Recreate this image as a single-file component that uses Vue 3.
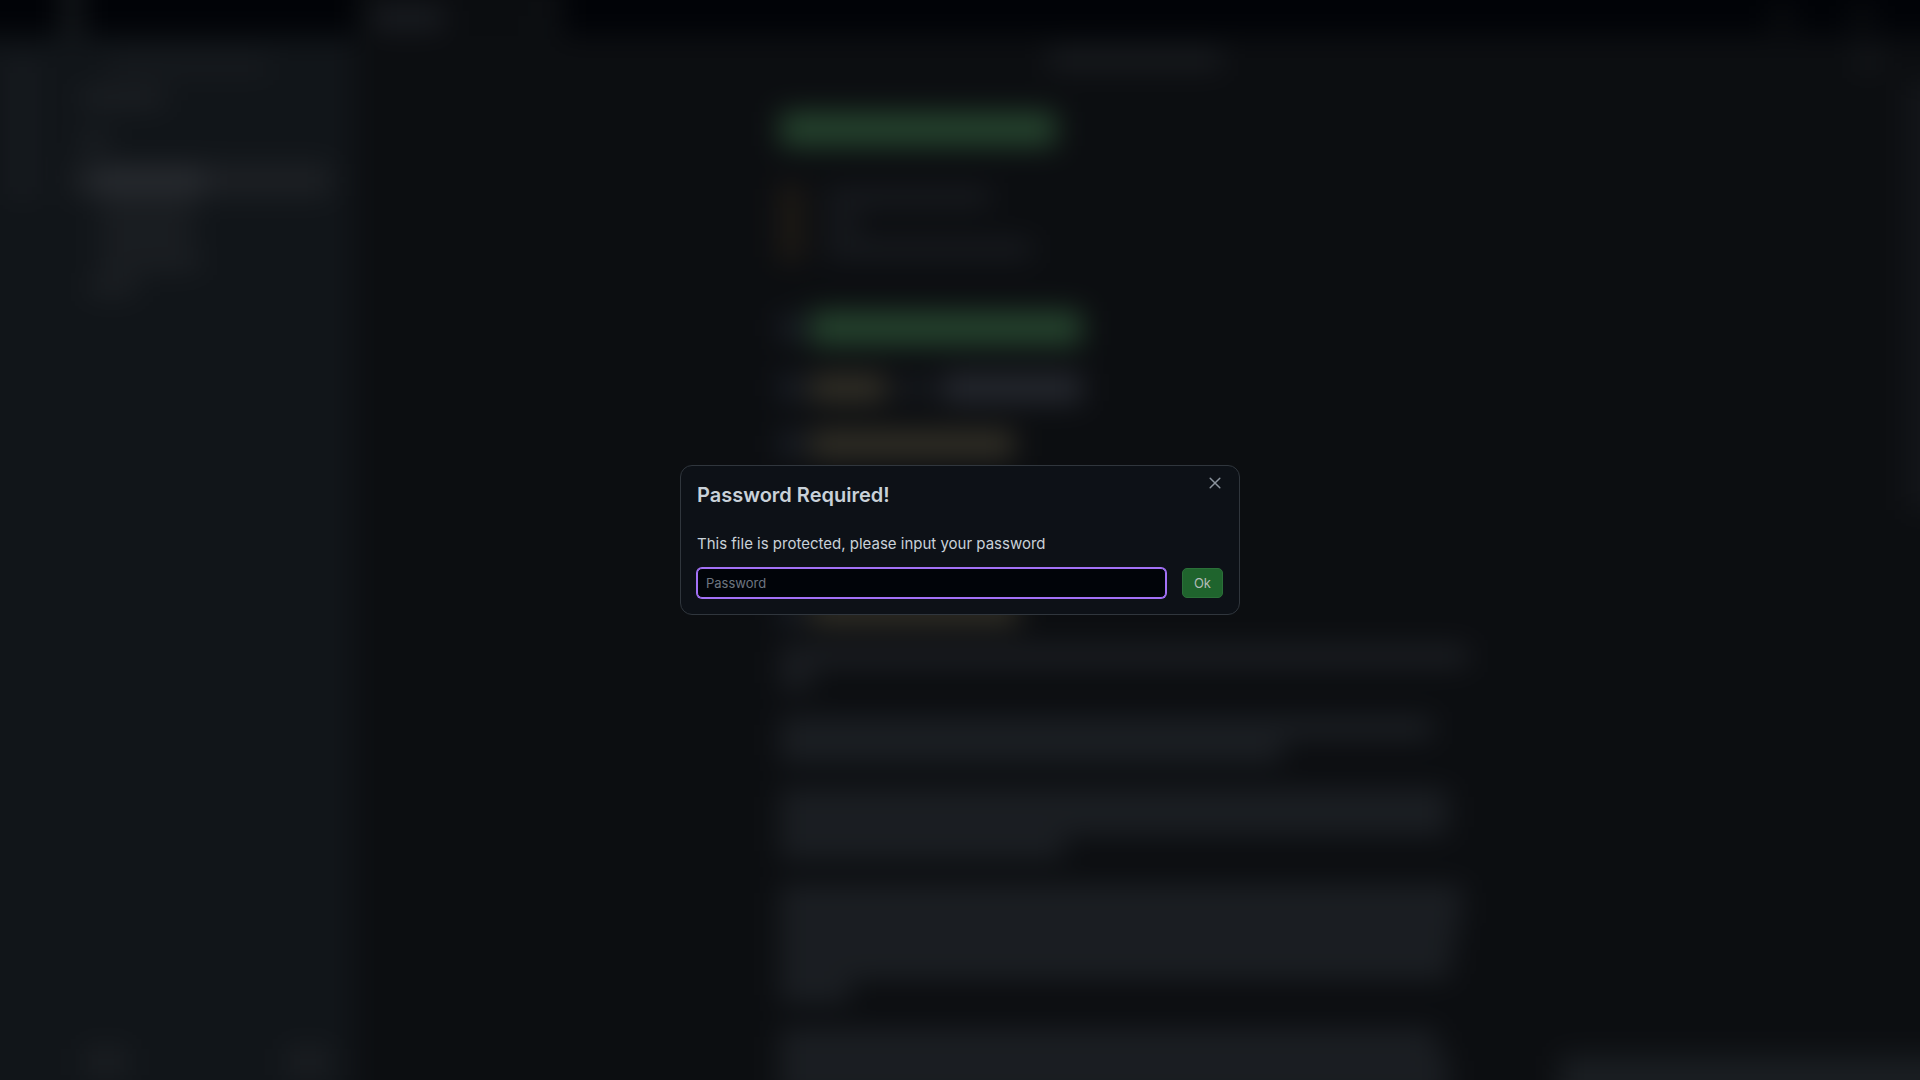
<script setup>
import { ref } from 'vue'

const password = ref('')
const open = ref(true)

const ribbon = [1, 2, 3, 4]
const tree = [
  { kind: 'tools', width: 160 },
  { kind: 'name', width: 84 },
  { kind: 'short', width: 28 },
  { kind: 'active', width: 112 },
  { kind: 'child', width: 96 },
  { kind: 'child', width: 92 },
  { kind: 'child', width: 100 },
  { kind: 'last', width: 48 },
]
const properties = [164, 32, 206]
const headings = [
  { kind: 'second', parts: [{ tone: 'green', width: 272 }] },
  { kind: 'mixed', parts: [{ tone: 'olive', width: 76 }, { tone: 'plain', width: 40 }, { tone: 'grey', width: 140 }] },
  { kind: 'third', parts: [{ tone: 'olive', width: 204 }] },
  { kind: 'fourth', parts: [{ tone: 'olive', width: 208 }] },
]
const paragraphs = [
  { soft: true, lines: [688, 32] },
  { soft: false, lines: [652, 502] },
  { soft: false, lines: [668, 668, 284] },
  { soft: false, lines: [682, 680, 674, 670, 70] },
  { soft: false, lines: [656, 668, 668] },
]
</script>

<template>
  <div class="app">
    <div class="workspace" aria-hidden="true">
      <div class="titlebar">
        <span class="toggle"></span>
        <div class="tab"><span class="tab-name"></span><span class="tab-close"></span></div>
        <div class="window-tools"><span></span><span></span></div>
      </div>
      <div class="panes">
        <div class="ribbon"><span v-for="n in ribbon" :key="n"></span></div>
        <div class="sidebar">
          <div v-for="(row, i) in tree" :key="i" class="row" :class="row.kind">
            <span :style="{ width: row.width + 'px' }"></span>
          </div>
          <div class="vault"><span></span><span></span></div>
        </div>
        <div class="note">
          <div class="crumbs"><span></span><i></i></div>
          <div class="scroller">
            <div class="article">
              <div class="title"></div>
              <div class="properties">
                <div v-for="(w, i) in properties" :key="i" class="property">
                  <i></i><span :style="{ width: w + 'px' }"></span>
                </div>
              </div>
              <div v-for="h in headings" :key="h.kind" class="heading" :class="h.kind">
                <i></i>
                <span v-for="(p, i) in h.parts" :key="i" :class="p.tone" :style="{ width: p.width + 'px' }"></span>
              </div>
              <div v-for="(p, i) in paragraphs" :key="i" class="paragraph" :class="{ soft: p.soft }">
                <span v-for="(w, j) in p.lines" :key="j" :style="{ width: w + 'px' }"></span>
              </div>
            </div>
            <div class="scrollbar"></div>
          </div>
        </div>
      </div>
      <div class="status"></div>
    </div>

    <div v-if="open" class="overlay">
      <form class="modal" role="dialog" aria-modal="true" aria-labelledby="modal-title" @submit.prevent="open = false">
        <button class="close" type="button" aria-label="Close" @click="open = false">
          <svg viewBox="0 0 18 18" width="18" height="18" fill="none" stroke="currentColor" stroke-width="1.5" stroke-linecap="round">
            <path d="M4.2 4.2 13.8 13.8M13.8 4.2 4.2 13.8" />
          </svg>
        </button>
        <h2 id="modal-title">Password Required!</h2>
        <label for="password">This file is protected, please input your password</label>
        <div class="fields">
          <input id="password" v-model="password" type="password" placeholder="Password" />
          <button class="ok" type="submit">Ok</button>
        </div>
      </form>
    </div>
  </div>
</template>

<style>
body {
  margin: 0;
  background: #0c0e11;
}
</style>

<style scoped>
* {
  box-sizing: border-box;
}

.app {
  position: relative;
  height: 100vh;
  overflow: hidden;
  font-family: Inter, "Liberation Sans", sans-serif;
  color: #c9d1d9;
}

/* Bleeds 40px past every edge so the blur never fades at the window's border. */
.workspace {
  position: relative;
  display: flex;
  flex-direction: column;
  height: calc(100% + 80px);
  margin: -40px;
  background: #0c0e11;
  filter: blur(14px);
}

.titlebar {
  display: flex;
  flex: none;
  height: 76px;
  background: #010307;
}

.toggle {
  width: 20px;
  margin-left: 102px;
  background: #16191c;
}

.tab {
  display: flex;
  align-items: center;
  justify-content: space-between;
  width: 208px;
  margin-left: 274px;
  padding: 40px 12px 0 16px;
  background: #0b0d10;
}

.tab-name {
  width: 72px;
  height: 20px;
  background: #1c1f24;
}

.tab-close {
  width: 16px;
  height: 16px;
  background: #101316;
}

.window-tools {
  display: flex;
  gap: 60px;
  margin-left: auto;
  padding: 48px 88px 0 0;
}

.window-tools span {
  width: 20px;
  height: 20px;
  background: #0e1013;
}

.panes {
  display: flex;
  flex: 1;
  min-height: 0;
}

.ribbon {
  display: flex;
  flex: none;
  flex-direction: column;
  align-items: center;
  gap: 12px;
  width: 84px;
  padding: 28px 0 0 40px;
  border-right: 1px solid #1b1e22;
  background: #111519;
}

.ribbon span {
  width: 22px;
  height: 24px;
  background: #1a1d22;
}

.sidebar {
  display: flex;
  flex: none;
  flex-direction: column;
  width: 310px;
  padding: 16px 24px 0 28px;
  background: #111519;
}

.row {
  display: flex;
  align-items: center;
  height: 26px;
  padding-left: 28px;
}

.row span {
  height: 14px;
  background: #202327;
}

.row.tools {
  height: 28px;
  padding-left: 36px;
}

.row.tools span {
  background: #191c20;
}

.row.name {
  height: 36px;
  padding-left: 8px;
}

.row.short {
  height: 48px;
  padding-left: 8px;
}

.row.active {
  height: 32px;
  padding-left: 20px;
  background: #1d2024;
}

.row.active span {
  height: 22px;
  background: #2a2d32;
}

.row.last {
  padding-left: 16px;
}

.vault {
  display: flex;
  justify-content: space-between;
  margin-top: auto;
  padding: 0 0 44px 12px;
}

.vault span {
  width: 44px;
  height: 28px;
  background: #1b1e22;
}

.note {
  display: flex;
  flex: 1;
  flex-direction: column;
  min-width: 0;
}

.crumbs {
  display: flex;
  flex: none;
  align-items: center;
  justify-content: flex-end;
  height: 46px;
}

.crumbs span {
  width: 172px;
  height: 18px;
  background: #1a1d21;
}

.crumbs i {
  width: 24px;
  height: 20px;
  margin-right: 80px;
  margin-left: calc(50% - 168px);
  background: #15181b;
}

.scroller {
  display: flex;
  flex: 1;
  min-height: 0;
  overflow: hidden;
}

.article {
  width: 700px;
  margin: 30px auto 0;
}

.title {
  width: 276px;
  height: 34px;
  background: #25442e;
}

.properties {
  margin: 38px 0 36px;
}

.property {
  display: flex;
  align-items: center;
  gap: 24px;
  height: 26px;
}

.property i {
  width: 22px;
  height: 20px;
  background: #261f16;
}

.property span {
  height: 14px;
  background: #1c1f24;
}

.heading {
  display: flex;
  align-items: center;
  gap: 8px;
  height: 60px;
}

.heading i {
  width: 22px;
  height: 22px;
  background: #1d222b;
}

.heading span {
  height: 26px;
}

.heading .green {
  height: 34px;
  background: #25442e;
}

.heading .olive {
  background: #353228;
}

.heading .grey {
  height: 28px;
  background: #262930;
}

.heading .plain {
  height: 20px;
  background: #171a1f;
}

.heading.third {
  height: 52px;
}

.heading.fourth {
  height: 54px;
  margin-top: 114px;
}

.paragraph {
  margin: 0 0 32px;
}

.heading + .paragraph {
  margin-top: 10px;
}

.paragraph span {
  display: block;
  height: 16px;
  margin-bottom: 8px;
  background: #21252a;
}

.paragraph.soft span {
  background: #202328;
}

.scrollbar {
  flex: none;
  width: 54px;
  height: 428px;
  background: #131519;
}

.status {
  position: absolute;
  right: 0;
  bottom: 0;
  width: 400px;
  height: 64px;
  background: #1a1e22;
}

.overlay {
  position: absolute;
  inset: 0;
  display: grid;
  place-items: center;
}

.modal {
  position: relative;
  width: 560px;
  max-width: 90vw;
  padding: 16px;
  border: 1px solid #30363d;
  border-radius: 12px;
  background: #0d1117;
}

h2 {
  margin: 0 0 24px;
  font-size: 20px;
  font-weight: 600;
  line-height: 26px;
}

label {
  display: block;
  margin-bottom: 12px;
  font-size: 15px;
  line-height: 24px;
}

.fields {
  display: flex;
  gap: 16px;
}

input {
  flex: 1;
  min-width: 0;
  height: 30px;
  padding: 0 8px;
  border: 1px solid #a371f7;
  border-radius: 5px;
  outline: none;
  box-shadow: 0 0 0 1px #a371f7;
  background: #010409;
  color: #c9d1d9;
  font: 13px Inter, "Liberation Sans", sans-serif;
}

input::placeholder {
  color: #6e7681;
}

.ok {
  height: 30px;
  padding: 0 11px;
  border: 1px solid #2b7039;
  border-radius: 5px;
  background: #1f642d;
  color: #b4bcb9;
  font: 13px Inter, "Liberation Sans", sans-serif;
}

.close {
  position: absolute;
  top: 8px;
  right: 15px;
  width: 18px;
  height: 18px;
  padding: 0;
  border: 0;
  background: none;
  color: #8b949e;
}

.close svg {
  display: block;
}
</style>
